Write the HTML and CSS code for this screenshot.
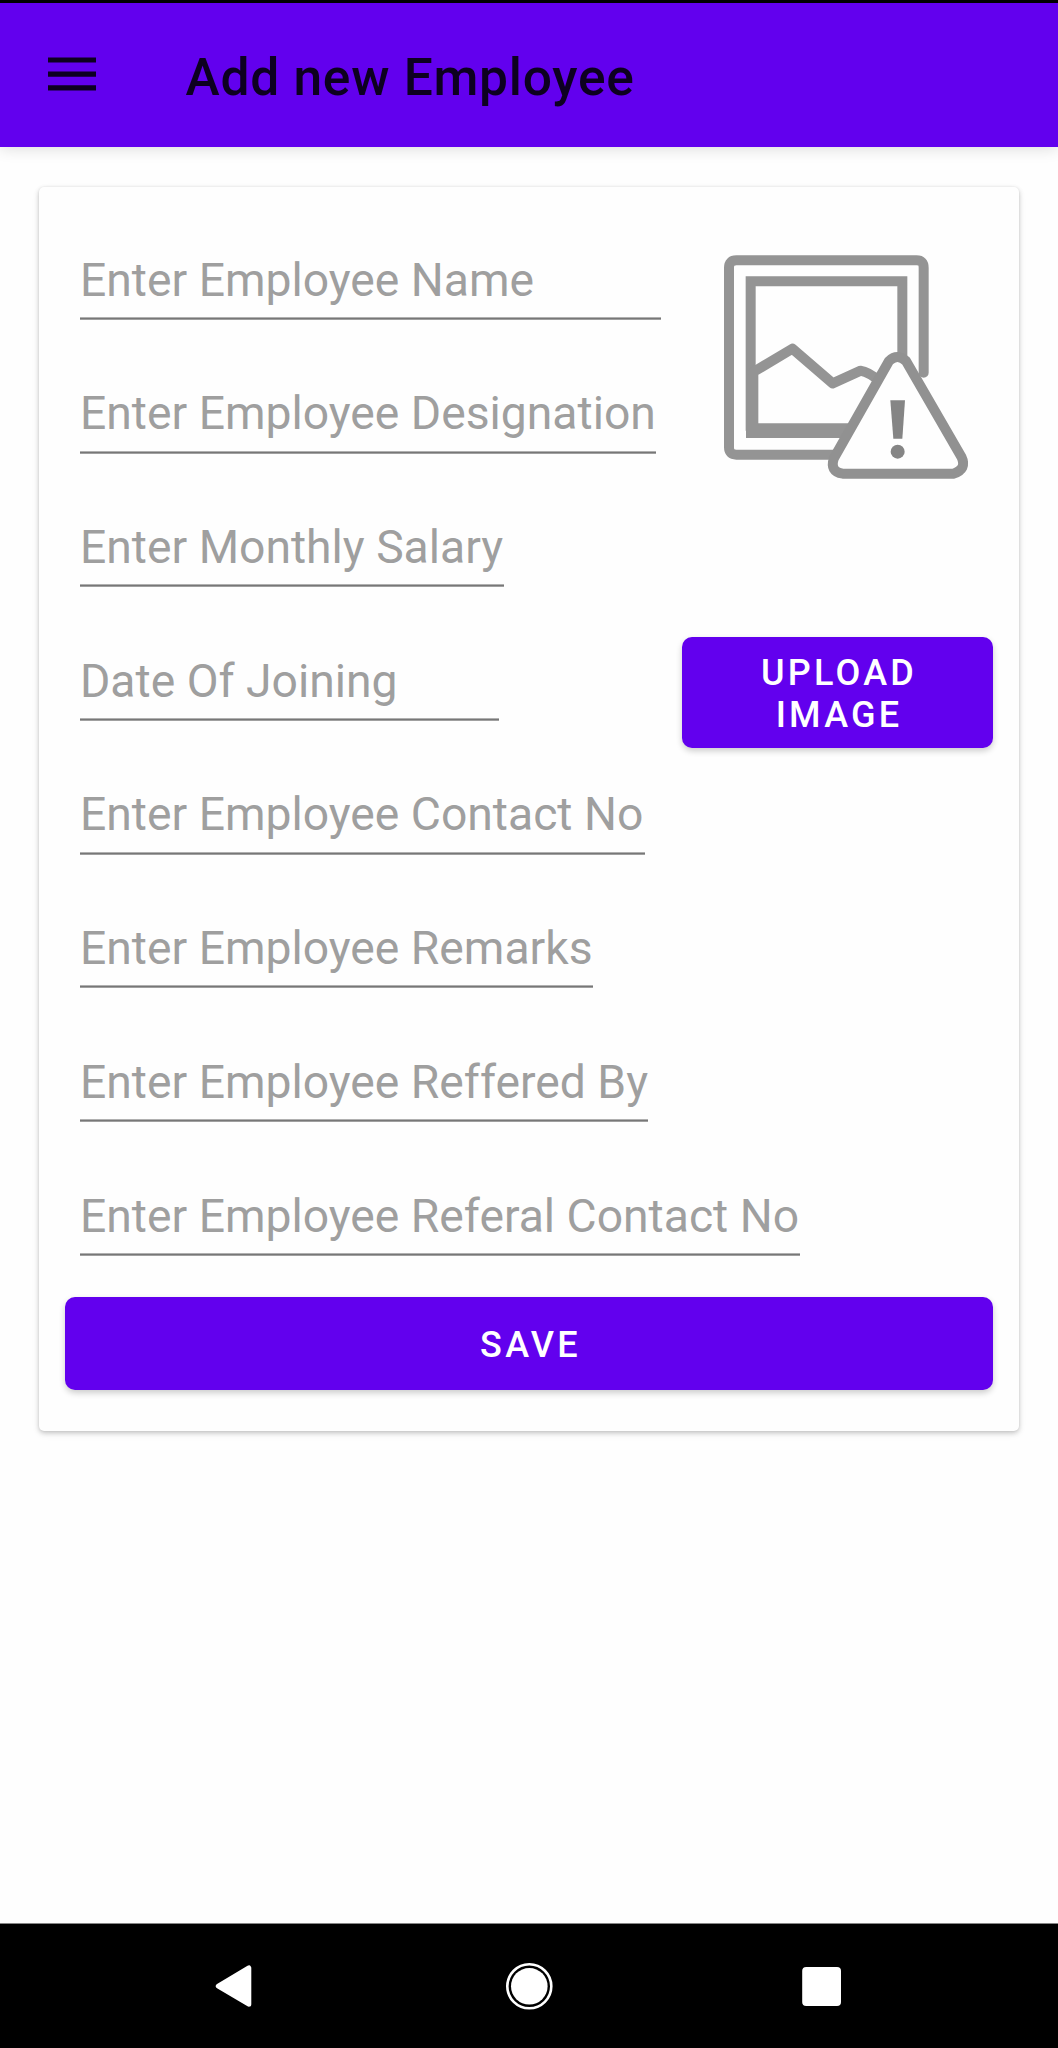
FILE: index.html
```html
<!DOCTYPE html>
<html lang="en">
<head>
<meta charset="utf-8">
<title>Add new Employee</title>
<link rel="stylesheet" href="styles.css">
</head>
<body>
<div class="screen">
  <header class="app-bar">
    <svg class="menu-icon" viewBox="0 0 48 34" aria-label="Menu"><path d="M0 .4h48v5.2H0zM0 14.5h48v5.2H0zM0 28.2h48v5.2H0z"/></svg>
    <h1 class="title">Add new Employee</h1>
  </header>
  <main class="card">
    <div class="top">
      <div class="fields">
        <div class="row"><div class="field name">Enter Employee Name</div></div>
        <div class="row"><div class="field designation">Enter Employee Designation</div></div>
        <div class="row"><div class="field salary">Enter Monthly Salary</div></div>
        <div class="row"><div class="field joining">Date Of Joining</div></div>
      </div>
      <div class="side">
        <svg class="photo" viewBox="-24 0 933 840" aria-label="No image">
          <g fill="none" stroke="#949494" stroke-width="30" stroke-linejoin="round">
            <path stroke-linecap="round" d="M701 428V113Q701 91 680 91H139Q117 91 117 113V652Q117 674 139 674H440"/>
            <path stroke-linejoin="miter" d="M182 602V154H637V420"/>
            <path stroke-width="44" d="M168 602H500"/>
            <path d="M190 590V426L307 356L428 460L512 422Q535 424 575 458"/>
          </g>
          <path fill="#fefefe" stroke="#919191" stroke-width="30" stroke-linejoin="round" d="M597 393Q622 369 648 393L814 680Q832 718 790 731H458Q418 725 432 684z"/>
          <path fill="#858585" d="M601 511H645L637 626H610z"/>
          <circle cx="623" cy="665" r="21" fill="#858585"/>
        </svg>
        <button class="button upload">UPLOAD<br>IMAGE</button>
      </div>
    </div>
    <div class="fields">
      <div class="row"><div class="field contact">Enter Employee Contact No</div></div>
      <div class="row"><div class="field remarks">Enter Employee Remarks</div></div>
      <div class="row"><div class="field referrer">Enter Employee Reffered By</div></div>
      <div class="row"><div class="field referral">Enter Employee Referal Contact No</div></div>
    </div>
    <button class="button save">SAVE</button>
  </main>
  <nav class="nav-bar">
    <svg class="nav-icon" viewBox="-25 -25 50 50" aria-label="Back"><path fill="#fff" stroke="#fff" stroke-width="5" stroke-linejoin="round" d="M-14.7 .1L15.8 -18V18.2z"/></svg>
    <svg class="nav-icon" viewBox="-26.3 -25.3 50 50" aria-label="Home"><circle r="18.3" fill="#fff"/><circle r="22" fill="none" stroke="#fff" stroke-width="2.6"/></svg>
    <svg class="nav-icon" viewBox="-24.6 -25.4 50 50" aria-label="Recent apps"><rect x="-19.4" y="-19.4" width="38.8" height="39" rx="4" fill="#fff"/></svg>
  </nav>
</div>
</body>
</html>
```
FILE: styles.css
```css
* {
  box-sizing: border-box;
}

body {
  margin: 0;
  background: #fefefe;
  font-family: Roboto, "Liberation Sans", sans-serif;
}

.screen {
  display: flex;
  flex-direction: column;
  width: 1058px;
  height: 2048px;
  overflow: hidden;
}

.app-bar {
  display: flex;
  align-items: flex-start;
  height: 147px;
  padding-left: 48px;
  border-top: 3.4px solid #000;
  background: #6200ee;
  box-shadow: 0 2px 14px rgba(0, 0, 0, 0.13);
}

.menu-icon {
  width: 48px;
  height: 34px;
  margin-top: 54px;
  fill: #0d0020;
}

.title {
  margin: 45px 0 0 89.5px;
  color: #0d0020;
  font-size: 51.5px;
  font-weight: 500;
  line-height: 60px;
  letter-spacing: 0.74px;
  white-space: nowrap;
}

.card {
  width: 980px;
  height: 1244px;
  margin: 39.5px 0 0 39px;
  padding: 50px 26px 0;
  border-radius: 5px;
  background: #fefefe;
  box-shadow: 0 2px 5px rgba(0, 0, 0, 0.2), 0 0 2px rgba(0, 0, 0, 0.08), 0 3px 10px rgba(0, 0, 0, 0.05);
}

.top {
  display: flex;
  justify-content: space-between;
}

.fields {
  padding-left: 15px;
}

.row {
  height: 133.74px;
  padding-top: 16px;
}

.field {
  height: 67.3px;
  background: linear-gradient(#b0b0b0 1px, #777 1px 2px, #a0a0a0 2px) bottom / 100% 3px no-repeat;
  color: #9f9f9f;
  font-size: 46.25px;
  line-height: 54px;
  white-space: nowrap;
}

.name { width: 581px; }
.designation { width: 576px; }
.salary { width: 424px; }
.joining { width: 419px; }
.contact { width: 565px; }
.remarks { width: 513px; }
.referrer { width: 568px; }
.referral { width: 720px; }

.side {
  display: flex;
  flex-direction: column;
  width: 311px;
  margin-top: -6.5px;
}

.photo {
  width: 311px;
  height: 280px;
}

.button {
  display: block;
  padding: 4px 0 0 3px;
  border: 0;
  border-radius: 10px;
  background: #6200ee;
  box-shadow: 0 3px 6px rgba(0, 0, 0, 0.2);
  color: #fff;
  font: 500 36px/42px Roboto, "Liberation Sans", sans-serif;
  letter-spacing: 3.25px;
}

.upload {
  width: 311px;
  height: 111px;
  margin-top: 126.6px;
}

.save {
  width: 928px;
  height: 93px;
  margin-top: -9.5px;
}

.nav-bar {
  display: flex;
  align-items: center;
  justify-content: space-between;
  height: 125px;
  margin-top: auto;
  padding: 0 211px 1px 208px;
  border-top: 1px solid #858585;
  background: #000;
}

.nav-icon {
  width: 50px;
  height: 50px;
}
```
